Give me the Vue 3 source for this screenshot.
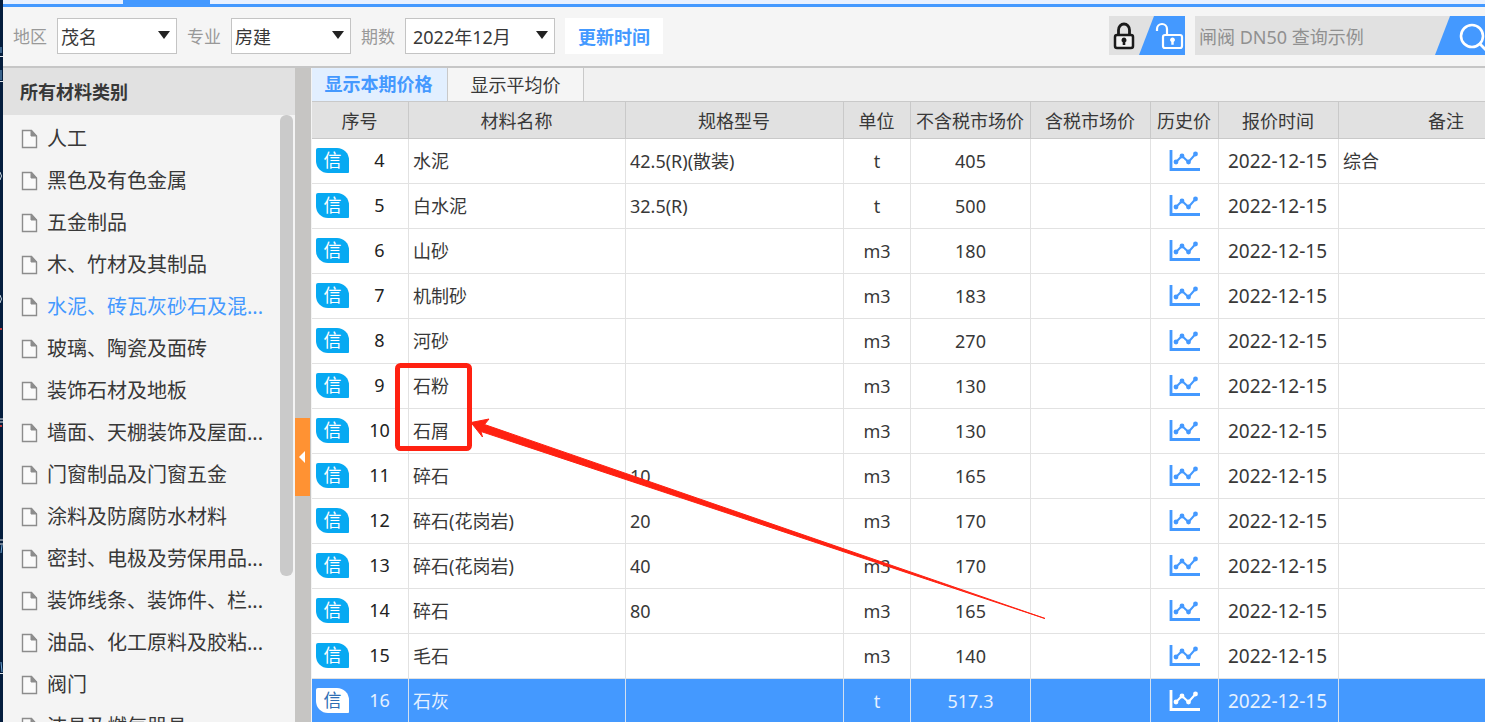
<script setup>
import { ref } from 'vue'

const filters = ref([
  { id: 'region', label: '地区', value: '茂名', size: 'regular' },
  { id: 'major', label: '专业', value: '房建', size: 'regular' },
  { id: 'period', label: '期数', value: '2022年12月', size: 'wide' }
])

const categories = [
  '人工',
  '黑色及有色金属',
  '五金制品',
  '木、竹材及其制品',
  '水泥、砖瓦灰砂石及混...',
  '玻璃、陶瓷及面砖',
  '装饰石材及地板',
  '墙面、天棚装饰及屋面...',
  '门窗制品及门窗五金',
  '涂料及防腐防水材料',
  '密封、电极及劳保用品...',
  '装饰线条、装饰件、栏...',
  '油品、化工原料及胶粘...',
  '阀门',
  '洁具及燃气器具'
]
const activeCategory = ref(4)

const columns = [
  { key: 'no', title: '序号' },
  { key: 'name', title: '材料名称' },
  { key: 'spec', title: '规格型号' },
  { key: 'unit', title: '单位' },
  { key: 'net', title: '不含税市场价' },
  { key: 'gross', title: '含税市场价' },
  { key: 'history', title: '历史价' },
  { key: 'date', title: '报价时间' },
  { key: 'note', title: '备注' }
]

const rows = [
  [4, '水泥', '42.5(R)(散装)', 't', '405', '综合'],
  [5, '白水泥', '32.5(R)', 't', '500', ''],
  [6, '山砂', '', 'm3', '180', ''],
  [7, '机制砂', '', 'm3', '183', ''],
  [8, '河砂', '', 'm3', '270', ''],
  [9, '石粉', '', 'm3', '130', ''],
  [10, '石屑', '', 'm3', '130', ''],
  [11, '碎石', '10', 'm3', '165', ''],
  [12, '碎石(花岗岩)', '20', 'm3', '170', ''],
  [13, '碎石(花岗岩)', '40', 'm3', '170', ''],
  [14, '碎石', '80', 'm3', '165', ''],
  [15, '毛石', '', 'm3', '140', ''],
  [16, '石灰', '', 't', '517.3', '']
].map(([no, name, spec, unit, net, note]) => ({ no, name, spec, unit, net, note }))
const selected = ref(16)
</script>

<template>
  <div class="page">
    <svg class="edge" width="3" height="722" viewBox="0 0 3 722" aria-hidden="true">
      <path d="M0 56.500h3M0 81.500h3M0 419h3M0 422h3M0 540h3M0 544h3M0 673.500h3" stroke="#dfe5ec" />
      <path d="M1 47v6M1 70v10M1 662l1 10M2 545l-1 8" stroke="#6ea8d8" />
      <path d="M0 329h2M0 426h2" stroke="#c23a3a" stroke-width="2" />
      <path d="M0 295q3 4 0 8M0 172q3 4 0 8" stroke="#c8d6df" fill="none" />
    </svg>
    <div class="window">
      <div class="strip"><span class="strip-tab"></span></div>
      <header class="toolbar">
        <div v-for="f in filters" :key="f.id" class="field">
          <label :for="f.id">{{ f.label }}</label>
          <div class="picker" :class="f.size">
            <select :id="f.id" v-model="f.value">
              <option>{{ f.value }}</option>
            </select>
          </div>
        </div>
        <button class="refresh" type="button">更新时间</button>

        <div class="right">
          <div class="locks">
            <button type="button" aria-label="锁定">
              <svg width="38" height="39" viewBox="0 0 38 39">
                <rect x="6" y="19" width="18" height="13" rx="2" fill="#f3f3f3" stroke="#1b1b1b" stroke-width="2.500" />
                <path d="M9.500 19v-5a5.500 6 0 0 1 11 0v5" fill="none" stroke="#1b1b1b" stroke-width="2.800" />
                <path d="M15 21.500a2.600 2.600 0 0 1 1.300 4.800v2.700h-2.600v-2.700a2.600 2.600 0 0 1 1.300-4.800z" fill="#1b1b1b" />
              </svg>
            </button>
            <button type="button" aria-label="解锁">
              <svg width="38" height="39" viewBox="0 0 38 39">
                <path d="M7 0H38V39H-8z" fill="#4499ff" />
                <rect x="16" y="19" width="19" height="13" rx="2" fill="none" stroke="#fff" stroke-width="2.200" />
                <path d="M10 15v-2a5 5 0 0 1 10 0v6" fill="none" stroke="#fff" stroke-width="2.200" />
                <path d="M25.500 21.500a2.400 2.400 0 0 1 1.200 4.500v2.700h-2.400v-2.700a2.400 2.400 0 0 1 1.200-4.500z" fill="#fff" />
              </svg>
            </button>
          </div>
          <form class="search" @submit.prevent>
            <input type="search" placeholder="闸阀 DN50 查询示例" aria-label="查询" />
            <button type="submit" aria-label="搜索">
              <svg width="80" height="39" viewBox="0 0 80 39">
                <path d="M15 0H80V39H0z" fill="#4499ff" />
                <circle cx="37" cy="20" r="11" fill="none" stroke="#fff" stroke-width="2.600" />
                <path d="M45 28l8 8" stroke="#fff" stroke-width="2.800" stroke-linecap="round" />
              </svg>
            </button>
          </form>
        </div>
      </header>

      <main class="body">
        <aside class="sidebar">
          <h2>所有材料类别</h2>
          <ul>
            <li v-for="(c, i) in categories" :key="c">
              <a href="#" :class="{ active: i === activeCategory }" @click.prevent="activeCategory = i">
                <svg width="17" height="20" viewBox="0 0 17 20" aria-hidden="true">
                  <path d="M1.500 1.500h9l5 5.500v11.500h-14z" fill="#fafafa" stroke="#8c8c8c" stroke-width="1.400" />
                  <path d="M10 1.500v5.500h5.500z" fill="#8c8c8c" stroke="#8c8c8c" />
                </svg>
                <span>{{ c }}</span>
              </a>
            </li>
          </ul>
          <span class="thumb"></span>
        </aside>
        <div class="splitter">
          <button type="button" aria-label="收起">
            <svg width="6" height="12" viewBox="0 0 6 12"><path d="M6 0v12L0 6z" fill="#fff" /></svg>
          </button>
        </div>

        <section class="content">
          <nav class="tabs">
            <button type="button" class="current">显示本期价格</button>
            <button type="button">显示平均价</button>
          </nav>
          <div class="grid">
            <table>
              <colgroup>
                <col v-for="c in columns" :key="c.key" :class="'col-' + c.key" />
              </colgroup>
              <thead>
                <tr>
                  <th v-for="c in columns" :key="c.key" scope="col">{{ c.title }}</th>
                </tr>
              </thead>
              <tbody>
                <tr v-for="r in rows" :key="r.no" :class="{ selected: r.no === selected }" @click="selected = r.no">
                  <td class="no">
                    <div><span class="badge">信</span><span class="index">{{ r.no }}</span></div>
                  </td>
                  <td>{{ r.name }}</td>
                  <td>{{ r.spec }}</td>
                  <td class="mid">{{ r.unit }}</td>
                  <td class="mid">{{ r.net }}</td>
                  <td></td>
                  <td class="mid">
                    <svg class="chart" width="32" height="24" viewBox="0 0 32 24" aria-hidden="true">
                      <path d="M2 1v19.500H31" fill="none" stroke="currentColor" stroke-width="2.800" />
                      <path d="M7 13L13 7L19.500 13L26.500 5" fill="none" stroke="currentColor" stroke-width="2" />
                      <g fill="currentColor">
                        <circle cx="7" cy="13" r="2.400" /><circle cx="13" cy="7" r="2.400" />
                        <circle cx="19.500" cy="13" r="2.400" /><circle cx="26.500" cy="5" r="2.400" />
                      </g>
                    </svg>
                  </td>
                  <td class="mid date">2022-12-15</td>
                  <td>{{ r.note }}</td>
                </tr>
              </tbody>
            </table>
          </div>
        </section>
      </main>
    </div>

    <svg class="marks" width="1060" height="640" viewBox="0 0 1060 640" aria-hidden="true">
      <rect x="397.500" y="365.500" width="72" height="83" rx="3" fill="none" stroke="#ff2111" stroke-width="5" />
      <path d="M471 422.500L489 419L484.500 424.500L1045 618.500L481 431.500L482.500 437z" fill="#ff2111" stroke="#ff2111" />
    </svg>
  </div>
</template>

<style>
body {
  margin: 0;
  overflow: hidden;
}
</style>

<style scoped>
* {
  box-sizing: border-box;
}
.page {
  position: relative;
  display: flex;
  height: 100vh;
  overflow: hidden;
  font: 18px/24px "Noto Sans", "Noto Sans CJK SC", sans-serif;
  color: #383838;
  background: #f4f4f4;
}
button, input, select {
  margin: 0;
  padding: 0;
  border: 0;
  border-radius: 0;
  font: inherit;
  color: inherit;
  background: none;
}
svg {
  display: block;
}
.edge {
  flex: none;
  background: #041d3d;
}
.window {
  flex: 1;
  min-width: 0;
  display: flex;
  flex-direction: column;
}
.strip {
  flex: none;
  height: 7px;
  background: #e9f1ff;
  border-bottom: 3px solid #4499ff;
}
.strip-tab {
  display: block;
  width: 87px;
  height: 4px;
  margin-left: 120px;
  background: #4499ff;
}
.toolbar {
  flex: none;
  display: flex;
  align-items: center;
  gap: 10px;
  height: 61px;
  padding: 0 0 2px 10px;
  background: #f5f5f5;
  border-bottom: 2px solid #c6c6c6;
  overflow: hidden;
}
.field {
  display: flex;
  align-items: center;
  gap: 10px;
}
.field label {
  padding-top: 2px;
  font-size: 17px;
  color: #999;
}
.picker {
  position: relative;
  width: 120px;
}
.picker.wide {
  width: 150px;
}
.picker::after {
  content: "";
  position: absolute;
  right: 7px;
  top: 13px;
  border: 6px solid transparent;
  border-top: 8px solid #222;
  border-bottom: 0;
  pointer-events: none;
}
.picker select {
  width: 100%;
  height: 36px;
  padding: 2px 3px 0;
  appearance: none;
  background: #fff;
  border: 1px solid #c4c4c4;
}
.picker.wide select {
  padding-left: 7px;
}
.refresh {
  width: 98px;
  height: 36px;
  padding-top: 2px;
  background: #fff;
  color: #4499ff;
  font-weight: 700;
}
.right {
  display: flex;
  gap: 10px;
  margin: 0 -30px 0 auto;
}
.locks {
  display: flex;
  height: 39px;
  background: #e1e1e1;
}
.locks svg {
  overflow: visible;
}
.search {
  display: flex;
  width: 320px;
  height: 39px;
  background: #e1e1e1;
}
.search input {
  flex: 1;
  min-width: 0;
  padding: 2px 0 0 4px;
  outline: 0;
}
.search input::placeholder {
  color: #909090;
  opacity: 1;
}
.body {
  flex: 1;
  min-height: 0;
  display: flex;
}
.sidebar {
  position: relative;
  flex: none;
  width: 292px;
  overflow: hidden;
  background: #f4f4f4;
}
.sidebar h2 {
  margin: 0;
  height: 47px;
  padding: 1px 0 0 17px;
  font-size: 18px;
  line-height: 47px;
  font-weight: 700;
  background: #e1e1e1;
}
.sidebar ul {
  margin: 0;
  padding: 3px 0 0;
  list-style: none;
}
.sidebar a {
  display: flex;
  align-items: center;
  gap: 9px;
  height: 42px;
  padding-left: 18px;
  font-size: 20px;
  line-height: 28px;
  white-space: nowrap;
  color: #383838;
  text-decoration: none;
}
.sidebar a.active {
  color: #4499ff;
}
.thumb {
  position: absolute;
  right: 2px;
  top: 47px;
  width: 13px;
  height: 461px;
  border-radius: 6px;
  background: #cacaca;
}
.splitter {
  flex: none;
  display: flex;
  align-items: center;
  width: 16px;
  margin-right: 1px;
  background: #c6c5c3;
}
.splitter button {
  display: flex;
  align-items: center;
  width: 15px;
  height: 78px;
  margin-top: 124px;
  padding-left: 4px;
  background: #ff9233;
}
.content {
  flex: 1;
  min-width: 0;
  background: #fff;
  overflow: hidden;
}
.tabs {
  display: flex;
  height: 33px;
  background: #f1f1f1;
}
.tabs button {
  width: 136px;
  padding-top: 1px;
  border-right: 1px solid #c9c9c9;
  background: #f5f5f5;
}
.tabs .current {
  padding: 0 2px 1px 0;
  color: #4499ff;
  background: #e2efff;
  font-weight: 700;
}
.grid {
  overflow: hidden;
}
table {
  width: 100%;
  min-width: 1243px;
  table-layout: fixed;
  border-collapse: separate;
  border-spacing: 0;
}
.col-no { width: 97px; }
.col-name { width: 217px; }
.col-spec { width: 218px; }
.col-unit { width: 67px; }
.col-net, .col-gross, .col-date { width: 120px; }
.col-history { width: 68px; }
th {
  height: 38px;
  padding: 2px 1px 0 0;
  font-weight: 400;
  background: #e1e1e1;
  border: solid #c9c9c9;
  border-width: 1px 1px 1px 0;
  white-space: nowrap;
}
td {
  height: 45px;
  padding: 0 4px;
  border: solid #e2e2e2;
  border-width: 0 1px 1px 0;
  white-space: nowrap;
}
td.mid {
  padding: 0;
  text-align: center;
}
td.date {
  padding-right: 2px;
  font-size: 19px;
}
td.no {
  padding: 0 0 2px 4px;
}
td.no div {
  display: flex;
  align-items: center;
}
.badge {
  flex: none;
  width: 33px;
  height: 25px;
  line-height: 25px;
  text-align: center;
  color: #fff;
  background: #07a9f2;
  border-radius: 2px 12px 1px 12px;
}
.index {
  flex: 1;
  padding-left: 2px;
  text-align: center;
  color: #222;
}
.chart {
  margin: 0 auto;
  color: #4499ff;
}
.selected td {
  color: #e6f1ff;
  background: #4499ff;
  border-color: #d3e0f0;
}
.selected .index {
  color: #e6f1ff;
}
.selected .chart {
  color: #fff;
}
.selected .badge {
  color: #2f6fb5;
  background: #fff;
}
.marks {
  position: absolute;
  left: 0;
  top: 0;
  pointer-events: none;
}
</style>
